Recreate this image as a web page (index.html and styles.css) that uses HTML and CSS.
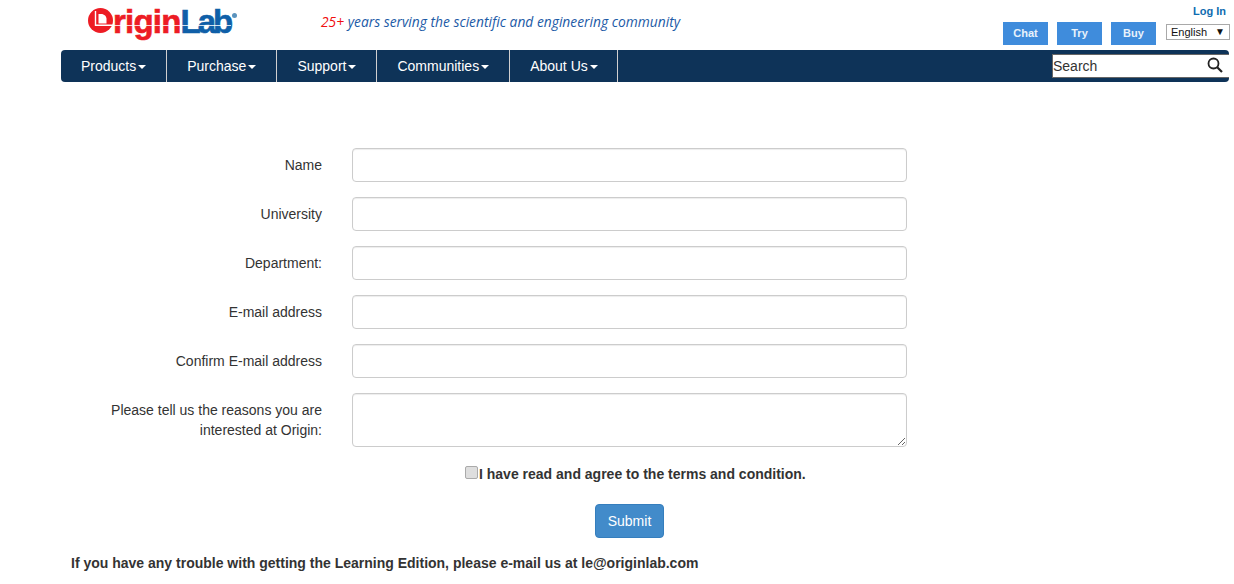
FILE: index.html
```html
<!DOCTYPE html>
<html>
<head>
  <meta charset="UTF-8">
  <title>OriginLab - Learning Edition</title>
  <link rel="stylesheet" href="styles.css">
</head>
<body>
  <div class="top">
    <div class="logo">
      <svg class="logo-o" width="25" height="25" viewBox="0 0 25 25"><circle cx="12.500" cy="12.500" r="12.500" fill="#ed1c24"/><path d="M10.500 6 H13 C16.500 6 18.500 8.500 18.500 11 V15.500 H10.500 Z" fill="#fff"/><path d="M7.500 3 V17.200 H25" fill="none" stroke="#fff" stroke-width="1.400"/></svg>
      <span class="logo-red">rigin</span><span class="logo-blue">Lab</span><span class="logo-reg"></span>
    </div>
    <div class="tagline"><span class="red">25+</span> years serving the scientific and engineering community</div>
    <div class="top-right">
      <a class="login" href="#">Log In</a>
      <div class="top-buttons">
        <a class="top-btn" href="#">Chat</a>
        <a class="top-btn" href="#">Try</a>
        <a class="top-btn" href="#">Buy</a>
        <div class="lang"><span>English</span><span class="lang-arrow">▼</span></div>
      </div>
    </div>
  </div>

  <div class="nav">
    <a href="#">Products<i class="caret"></i></a>
    <a href="#">Purchase<i class="caret"></i></a>
    <a href="#">Support<i class="caret"></i></a>
    <a href="#">Communities<i class="caret"></i></a>
    <a href="#">About Us<i class="caret"></i></a>
    <div class="search">
      <span>Search</span>
      <svg class="search-icon" width="16" height="16" viewBox="0 0 16 16"><circle cx="6.500" cy="6.500" r="5" fill="none" stroke="#222" stroke-width="1.800"/><path d="M10.200 10.200 L15 15" stroke="#222" stroke-width="2.200"/></svg>
    </div>
  </div>

  <form class="form">
    <label for="name">Name</label>
    <input type="text" id="name">
    <label for="university">University</label>
    <input type="text" id="university">
    <label for="department">Department:</label>
    <input type="text" id="department">
    <label for="email">E-mail address</label>
    <input type="text" id="email">
    <label for="confirm">Confirm E-mail address</label>
    <input type="text" id="confirm">
    <label for="reasons">Please tell us the reasons you are interested at Origin:</label>
    <textarea id="reasons"></textarea>
  </form>

  <div class="agree"><i class="check"></i><label>I have read and agree to the terms and condition.</label></div>
  <div class="submit-row"><button type="button">Submit</button></div>
  <p class="trouble">If you have any trouble with getting the Learning Edition, please e-mail us at le@originlab.com</p>
</body>
</html>
```

FILE: styles.css
```css
body {
  margin: 0;
  background-color: #fff;
  font-family: "Liberation Sans", Arial, sans-serif;
  font-size: 14px;
  color: #333;
}
a {
  text-decoration: none;
}
.top {
  display: flex;
  height: 50px;
  padding-left: 88px;
  padding-right: 4px;
}
.logo {
  position: relative;
  display: flex;
  width: 149px;
  height: 40px;
  margin-top: 3px;
  font-size: 33px;
  font-weight: bold;
  line-height: 38px;
  -webkit-text-stroke: 0.6px;
}
/* thin white cut running through the wordmark */
.logo::after {
  content: "";
  position: absolute;
  left: 20px;
  right: 6px;
  top: 21.500px;
  height: 1px;
  background-color: #fff;
  opacity: 0.8;
}
.logo-o {
  flex: none;
  margin-top: 5px;
}
.logo-red {
  color: #ed1c24;
  letter-spacing: -0.8px;
}
.logo-blue {
  color: #0f5fa8;
  letter-spacing: -3px;
}
.logo-reg {
  flex: none;
  width: 5px;
  height: 5px;
  margin-left: 2px;
  margin-top: 10px;
  border-radius: 50%;
  background-color: #5b93bd;
}
.tagline {
  margin-left: 84px;
  margin-top: 12px;
  font-family: "Open Sans", sans-serif;
  font-style: italic;
  font-size: 13.800px;
  line-height: 20px;
  color: #1c5aa6;
}
.red {
  color: #f01010;
}
.top-right {
  margin-left: auto;
  display: flex;
  flex-direction: column;
  align-items: flex-end;
}
.login {
  margin-top: 5px;
  margin-right: 4px;
  font-size: 11px;
  font-weight: bold;
  line-height: 13px;
  color: #0f6cb0;
}
.top-buttons {
  display: flex;
  margin-top: 4px;
}
.top-btn {
  width: 45px;
  height: 23px;
  margin-right: 9px;
  background-color: #3f8cdc;
  color: #e8f2fb;
  font-size: 11px;
  font-weight: bold;
  line-height: 23px;
  text-align: center;
}
.lang {
  display: flex;
  justify-content: space-between;
  box-sizing: border-box;
  width: 64px;
  height: 16px;
  margin-top: 2px;
  margin-left: 1px;
  padding: 0 4px;
  border: 1px solid #a9a9a9;
  font-size: 11px;
  line-height: 14px;
  color: #111;
}
.lang-arrow {
  font-size: 10px;
}
.nav {
  display: flex;
  height: 32px;
  margin-left: 61px;
  margin-right: 5px;
  background-color: #0e3358;
  border-radius: 4px;
}
.nav a {
  padding: 0 20px;
  border-right: 1px solid #d0d0d0;
  color: #fff;
  line-height: 32px;
}
.nav a:last-of-type {
  padding-right: 19px;
}
.caret {
  display: inline-block;
  margin-left: 2px;
  vertical-align: middle;
  border-top: 4px solid #fff;
  border-left: 4px solid transparent;
  border-right: 4px solid transparent;
}
.search {
  display: flex;
  align-items: center;
  justify-content: space-between;
  box-sizing: border-box;
  width: 177px;
  height: 24px;
  margin-left: auto;
  margin-top: 4px;
  padding-right: 6px;
  background-color: #fff;
  border: 1px solid #666;
  border-right: none;
  color: #333;
}
.search-icon {
  margin-top: -2px;
}
.form {
  display: grid;
  grid-template-columns: 262px 555px;
  column-gap: 30px;
  row-gap: 15px;
  margin-top: 66px;
  margin-left: 60px;
}
.form label {
  padding-top: 7px;
  line-height: 20px;
  text-align: right;
}
.form input, .form textarea {
  box-sizing: border-box;
  height: 34px;
  padding: 6px 12px;
  border: 1px solid #ccc;
  border-radius: 4px;
  box-shadow: inset 0 1px 1px rgba(0,0,0,.075);
  background-color: #fff;
}
.form textarea {
  height: 54px;
  margin: 0;
}
.agree {
  display: flex;
  align-items: flex-start;
  margin-top: 17px;
  margin-left: 465px;
  font-weight: bold;
  line-height: 20px;
}
.check {
  flex: none;
  box-sizing: border-box;
  width: 13px;
  height: 13px;
  margin: 2px 1px 0 0;
  background-color: #dedede;
  border: 1px solid #aaa;
  border-radius: 2px;
}
.submit-row {
  margin-top: 20px;
  margin-left: 595px;
}
button {
  width: 69px;
  height: 34px;
  padding: 0;
  background-color: #428bca;
  border: 1px solid #357ebd;
  border-radius: 4px;
  color: #fff;
  font-family: inherit;
  font-size: 14px;
}
.trouble {
  margin: 15px 0 0 71px;
  font-weight: bold;
  line-height: 20px;
}
```
